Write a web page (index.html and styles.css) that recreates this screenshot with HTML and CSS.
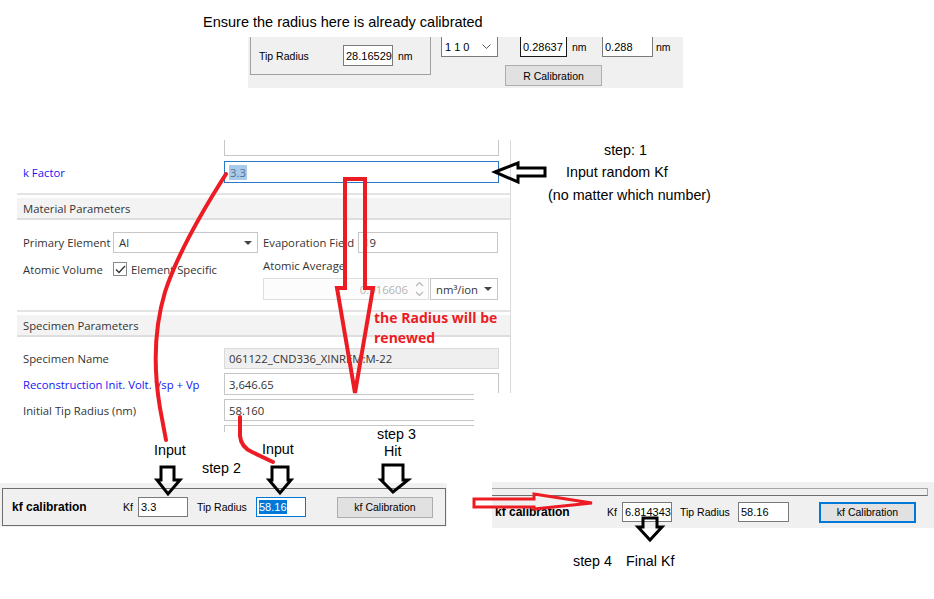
FILE: index.html
```html
<!DOCTYPE html>
<html lang="en">
<head>
<meta charset="utf-8">
<title>kf calibration steps</title>
<link rel="stylesheet" href="styles.css">
</head>
<body>
<div class="canvas">

  <div class="note title">Ensure the radius here is already calibrated</div>

  <section class="shot shot-top">
    <div class="grp">
      <span class="wlbl lbl-tip">Tip Radius</span>
      <span class="wtb tb-tip">28.16529</span>
      <span class="wlbl unit">nm</span>
    </div>
    <div class="rcal">
      <div class="rcal-row">
        <span class="wcombo">1 1 0
          <svg class="chev" width="9" height="6" viewBox="0 0 9 6"><path d="M0.5 0.5 L4.5 4.5 L8.5 0.5" fill="none" stroke="#555" stroke-width="1"/></svg>
        </span>
        <span class="wtb tb-a">0.28637</span><span class="wlbl unit2">nm</span>
        <span class="wtb tb-b">0.288</span><span class="wlbl unit3">nm</span>
      </div>
      <div class="wbtn rbtn">R Calibration</div>
    </div>
  </section>

  <section class="shot form">
    <div class="stub"></div>
    <div class="frow kf-row">
      <span class="flbl blue">k Factor</span>
      <span class="ftb focus"><span class="sel">3.3</span></span>
    </div>
    <div class="sep"></div>
    <div class="band">Material Parameters</div>
    <div class="mat">
      <div class="mrow">
        <span class="mlbl">Primary Element</span>
        <span class="fcombo pe">Al<i class="tri"></i></span>
        <span class="mlbl2">Evaporation Field</span>
        <span class="ftb evf">19</span>
      </div>
      <div class="mrow2">
        <div class="vol">
          <span class="mlbl">Atomic Volume</span>
          <span class="chk"><svg width="11" height="9" viewBox="0 0 11 9"><path d="M1 4.5 L4 7.5 L10 1" fill="none" stroke="#333" stroke-width="1.3"/></svg></span>
          <span class="chk-lbl">Element Specific</span>
        </div>
        <div class="avg">
          <span class="avg-lbl">Atomic Average</span>
          <div class="avg-ctl">
            <span class="spin">0.016606
              <svg class="spin-ar" width="9" height="16" viewBox="0 0 9 16"><path d="M1 5 L4.5 1.5 L8 5 M1 11 L4.5 14.5 L8 11" fill="none" stroke="#b8b8b8" stroke-width="1.2"/></svg>
            </span>
            <span class="fcombo unitc">nm³/ion<i class="tri"></i></span>
          </div>
        </div>
      </div>
    </div>
    <div class="sep sep2"></div>
    <div class="band">Specimen Parameters</div>
    <div class="spec">
      <div class="frow srow">
        <span class="flbl">Specimen Name</span>
        <span class="ftb ro">061122_CND336_XINREM:M-22</span>
      </div>
      <div class="frow srow">
        <span class="flbl blue">Reconstruction Init. Volt. Vsp + Vp</span>
        <span class="ftb">3,646.65</span>
      </div>
      <div class="frow srow">
        <span class="flbl">Initial Tip Radius (nm)</span>
        <span class="ftb">58.160</span>
      </div>
      <div class="stub2"></div>
    </div>
  </section>
  <div class="crop-mask"></div>

  <section class="shot kfl">
    <div class="kfbox">
      <span class="kfttl">kf calibration</span>
      <span class="wlbl kflbl">Kf</span>
      <span class="wtb kftb">3.3</span>
      <span class="wlbl tiplbl">Tip Radius</span>
      <span class="wtb kftb focusw"><span class="selw">58.16</span></span>
      <span class="wbtn kfbtn">kf Calibration</span>
    </div>
  </section>

  <section class="shot kfr">
    <div class="strip"></div>
    <div class="kfr-row">
      <span class="kfttl kfttl2">kf calibration</span>
      <span class="wlbl kflbl">Kf</span>
      <span class="wtb kftb">6.814343</span>
      <span class="wlbl tiplbl2">Tip Radius</span>
      <span class="wtb kftb kftb2">58.16</span>
      <span class="wbtn kfbtn2">kf Calibration</span>
    </div>
  </section>

  <svg class="marks" width="934" height="599" viewBox="0 0 934 599">
    <g fill="none" stroke="#ed1c24" stroke-width="4" stroke-linecap="round" stroke-linejoin="round">
      <path d="M226 174 C203 210 178 252 165 292 C153 332 154 372 160 408 L166 440"/>
      <path d="M240 417 L240 436 Q241 447 252 452 L273 462"/>
    </g>
    <g fill="none" stroke="#ed1c24" stroke-width="4" stroke-linejoin="miter">
      <path d="M345 179 L365 179 L365 288 L373 288 L355 393 L337 288 L345 288 Z"/>
    </g>
    <g fill="none" stroke="#ed1c24" stroke-width="3" stroke-linejoin="miter">
      <path d="M474 499 L534 499 L534 494 L592 503 L534 509 L534 507 L474 507 Z"/>
    </g>
    <g fill="none" stroke="#000" stroke-width="3" stroke-linejoin="miter">
      <path d="M495 172 L518 163 L518 168 L545 168 L545 176 L518 176 L518 182 Z"/>
      <path d="M161 467 L174 467 L174 480 L180 480 L168 494 L157 480 L161 480 Z"/>
      <path d="M272 467 L288 467 L288 480 L291 480 L280 493 L269 480 L272 480 Z"/>
      <path d="M383 465 L403 465 L403 480 L408 480 L393 492 L381 480 L383 480 Z"/>
      <path d="M643 518 L657 518 L657 527 L662 527 L650 540 L638 527 L643 527 Z"/>
    </g>
  </svg>

  <div class="note n-step1">step: 1</div>
  <div class="note n-input-kf">Input random Kf</div>
  <div class="note n-nomatter">(no matter which number)</div>
  <div class="note n-input1">Input</div>
  <div class="note n-step2">step 2</div>
  <div class="note n-input2">Input</div>
  <div class="note n-step3">step 3</div>
  <div class="note n-hit">Hit</div>
  <div class="note n-step4">step 4</div>
  <div class="note n-final">Final Kf</div>
  <div class="red-note">the Radius will be<br>renewed</div>
</div>
</body>
</html>
```

FILE: styles.css
```css
* { box-sizing: border-box; }
html, body { margin: 0; padding: 0; background: #fff; }
body { width: 934px; height: 599px; overflow: hidden; }

.canvas {
  position: relative;
  width: 934px;
  height: 599px;
  background: #fff;
  font-family: "Liberation Sans", Arial, sans-serif;
}

/* free-canvas pieces of the collage */
.shot { position: absolute; }
.note {
  position: absolute;
  font-family: "Liberation Sans", Arial, sans-serif;
  font-size: 14.3px;
  line-height: 16px;
  color: #000;
  white-space: nowrap;
}
.title { left: 203px; top: 14px; font-size: 14.5px; }

/* ---------- WinForms-like widgets ---------- */
.wlbl { font-size: 10.5px; color: #000; white-space: nowrap; }
.wtb {
  display: flex;
  align-items: center;
  height: 21px;
  background: #fff;
  border: 1px solid #7a7a7a;
  padding-left: 2px;
  font-size: 11px;
  color: #000;
  white-space: nowrap;
  overflow: hidden;
}
.wbtn {
  display: flex;
  align-items: center;
  justify-content: center;
  background: #e1e1e1;
  border: 1px solid #adadad;
  font-size: 10.5px;
  color: #000;
  white-space: nowrap;
}

/* ---------- top strip ---------- */
.shot-top {
  left: 248px; top: 37px;
  width: 435px; height: 51px;
  background: #f0f0f0;
  display: flex;
  align-items: flex-start;
}
.grp {
  margin-left: 2px;
  width: 181px; height: 38px;
  border: 1px solid #a0a0a0;
  border-top: none;
  display: flex;
  align-items: center;
  padding-left: 8px;
}
.lbl-tip { width: 84px; }
.tb-tip { width: 50px; height: 21px; }
.unit { margin-left: 5px; }
.rcal { margin-left: 10px; display: flex; flex-direction: column; }
.rcal-row { display: flex; align-items: center; height: 20px; }
.wcombo {
  width: 57px; height: 20px;
  background: #fff;
  border: 1px solid #7a7a7a;
  border-top: none;
  display: flex; align-items: center;
  padding-left: 3px;
  font-size: 11px;
  position: relative;
}
.chev { margin-left: auto; margin-right: 6px; }
.tb-a { margin-left: 22px; width: 47px; height: 20px; border-color: #1a1a1a; border-top: none; }
.tb-b { width: 51px; height: 20px; border-top: none; }
.unit2 { margin-left: 5px; width: 30px; }
.unit3 { margin-left: 3px; }
.rbtn { margin-top: 8px; margin-left: 64px; width: 97px; height: 21px; }

/* ---------- WPF form ---------- */
.form {
  left: 0; top: 140px;
  width: 511px; height: 292px;
  background: #fff;
  border-right: 1px solid #dadada;
  font-family: "Open Sans", "Noto Sans", sans-serif;
  font-size: 11.3px;
  color: #333;
  overflow: hidden;
}
.stub {
  margin-left: 224px;
  width: 275px; height: 16px;
  border: 1px solid #c6c6c6;
  border-top: none;
}
.frow { display: flex; align-items: center; }
.kf-row { margin-top: 5px; }
.flbl { width: 224px; padding-left: 23px; white-space: nowrap; }
.blue { color: #1515f5; }
.ftb {
  width: 275px; height: 22px;
  border: 1px solid #c6c6c6;
  display: flex; align-items: center;
  padding-left: 4px;
  background: #fff;
  white-space: nowrap;
  overflow: hidden;
}
.ftb.focus { border-color: #2a78c8; }
.sel { background: #a9cbea; color: #56709a; padding: 0 1px; line-height: 15px; }
.ro { background: #efefef; border-color: #dadada; }
.sep { margin: 10px 0 0 17px; height: 2px; background: #e4e4e4; }
.band {
  margin: 3px 0 0 17px;
  height: 22px;
  background: #f3f3f3;
  border-bottom: 2px solid #dedede;
  padding-left: 6px;
  display: flex; align-items: center;
  white-space: nowrap;
}
.mat { padding: 12px 0 0 23px; height: 90px; }
.mrow { display: flex; align-items: center; height: 21px; }
.mlbl { width: 90px; white-space: nowrap; }
.fcombo {
  position: relative;
  height: 21px;
  border: 1px solid #c6c6c6;
  background: #fff;
  display: flex; align-items: center;
  padding-left: 5px;
  white-space: nowrap;
}
.pe { width: 145px; }
.tri {
  margin-left: auto; margin-right: 5px;
  width: 0; height: 0;
  border-left: 4px solid transparent;
  border-right: 4px solid transparent;
  border-top: 4px solid #444;
}
.mlbl2 { width: 95px; margin-left: 5px; white-space: nowrap; }
.evf { width: 140px; height: 21px; }
.mrow2 { display: flex; }
.vol { width: 240px; height: 32px; display: flex; align-items: center; }
.chk {
  width: 14px; height: 14px;
  border: 1px solid #8a8a8a;
  background: #fff;
  display: flex; align-items: center; justify-content: center;
}
.chk-lbl { margin-left: 4px; white-space: nowrap; }
.avg { display: flex; flex-direction: column; }
.avg-lbl { margin-top: 5px; line-height: 16px; white-space: nowrap; }
.avg-ctl { margin-top: 4px; display: flex; }
.spin {
  width: 166px; height: 22px;
  border: 1px solid #dedede;
  background: #fcfcfc;
  color: #b4b4b4;
  display: flex; align-items: center; justify-content: flex-end;
  padding-right: 4px;
  white-space: nowrap;
}
.spin-ar { margin-left: 7px; }
.unitc { width: 68px; height: 22px; margin-left: 1px; color: #333; }
.unitc .tri { margin-right: 5px; }
.sep2 { margin-top: 0; }
.spec { padding-top: 11px; }
.srow { margin-bottom: 4px; }
.srow .ftb { height: 22px; }
.srow:first-child .ftb { height: 21px; }
.stub2 {
  margin-left: 224px;
  width: 275px; height: 8px;
  border: 1px solid #c6c6c6;
  border-bottom: none;
  margin-top: 1px;
}
/* the reference image is cropped here: white covers the cut-off corner */
.crop-mask {
  position: absolute;
  left: 474px; top: 393px;
  width: 50px; height: 42px;
  background: #fff;
}

/* ---------- kf calibration, left ---------- */
.kfl {
  left: 0; top: 483px;
  width: 447px; height: 44px;
  background: #f0f0f0;
  padding: 5px 0 0 2px;
}
.kfbox {
  width: 444px; height: 38px;
  border: 1px solid #6e6e6e;
  display: flex; align-items: center;
  padding-left: 9px;
}
.kfttl { width: 111px; font-weight: bold; font-size: 12px; color: #000; white-space: nowrap; }
.kflbl { width: 15px; }
.kftb { width: 50px; height: 20px; }
.tiplbl { margin-left: 9px; width: 59px; }
.focusw { border-color: #0078d7; }
.selw { background: #0078d7; color: #fff; line-height: 14px; }
.kfbtn { margin-left: 31px; width: 96px; height: 21px; }

/* ---------- kf calibration, right ---------- */
.kfr {
  left: 492px; top: 482px;
  width: 442px; height: 46px;
  background: #f0f0f0;
  padding-top: 6px;
}
.strip {
  width: 436px; height: 8px;
  border-top: 1px solid #a5a5a5;
  border-bottom: 1px solid #6e6e6e;
  border-right: 1px solid #a5a5a5;
}
.kfr-row { display: flex; align-items: center; height: 32px; padding-left: 3px; }
.kfttl2 { width: 112px; }
.tiplbl2 { margin-left: 8px; width: 58px; }
.kftb2 { width: 51px; }
.kfbtn2 {
  margin-left: 30px;
  width: 97px; height: 21px;
  border: 2px solid #0078d7;
}

/* ---------- annotations ---------- */
.marks { position: absolute; left: 0; top: 0; pointer-events: none; }
.n-step1 { left: 604px; top: 142px; }
.n-input-kf { left: 566px; top: 164px; }
.n-nomatter { left: 548px; top: 187px; }
.n-input1 { left: 154px; top: 442px; }
.n-step2 { left: 202px; top: 460px; }
.n-input2 { left: 262px; top: 441px; }
.n-step3 { left: 377px; top: 426px; }
.n-hit { left: 384px; top: 443px; }
.n-step4 { left: 573px; top: 553px; }
.n-final { left: 626px; top: 553px; }
.red-note {
  position: absolute;
  left: 374px; top: 308px;
  font-family: "Open Sans", "Noto Sans", sans-serif;
  font-weight: bold;
  font-size: 14px;
  line-height: 20px;
  color: #ed1c24;
  white-space: nowrap;
}
```
